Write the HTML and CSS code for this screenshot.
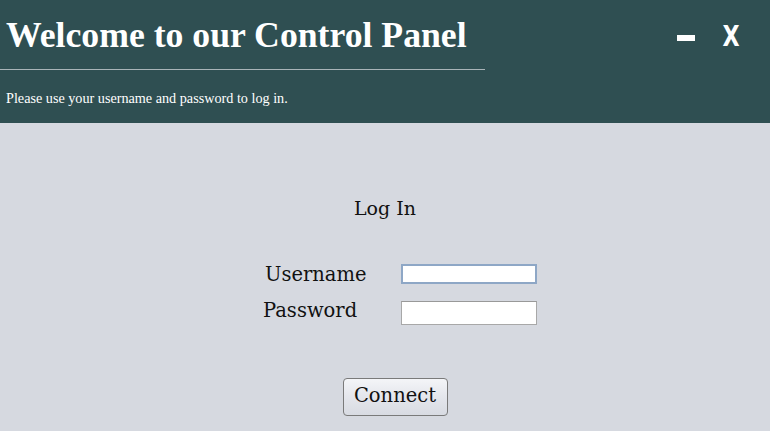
FILE: index.html
```html
<!DOCTYPE html>
<html>
<head>
<meta charset="utf-8">
<link rel="stylesheet" href="styles.css">
</head>
<body>
<header class="header">
  <div class="title-row">
    <h1 class="title">Welcome to our Control Panel</h1>
    <div class="controls">
      <span class="ctrl-min"></span>
      <span class="ctrl-close">X</span>
    </div>
  </div>
  <hr class="rule">
  <p class="subtitle">Please use your username and password to log in.</p>
</header>
<main class="main">
  <h2 class="login-title">Log In</h2>
  <form class="form">
    <div class="fields">
      <label class="label label-user">Username</label>
      <input class="input input-focus" type="text">
      <label class="label label-pass">Password</label>
      <input class="input input-pass" type="password">
    </div>
    <button class="btn" type="button">Connect</button>
  </form>
</main>
</body>
</html>
```
FILE: styles.css
```css
html, body { margin: 0; padding: 0; }
body {
  width: 770px;
  height: 431px;
  overflow: hidden;
  background: #d6d9e0;
  font-family: "DejaVu Serif", serif;
}
.header {
  background: #2f4f52;
  height: 123px;
  color: #fff;
}
.title-row {
  display: flex;
  align-items: flex-start;
  justify-content: space-between;
  height: 69px;
}
.title {
  margin: 0;
  padding: 17px 0 0 6px;
  font-family: "Liberation Serif", serif;
  font-weight: bold;
  font-size: 35.7px;
  line-height: 36px;
}
.controls {
  display: flex;
  align-items: center;
  gap: 26px;
  padding: 21px 29px 0 0;
}
.ctrl-min {
  display: block;
  width: 18px;
  height: 6px;
  background: #fff;
  margin-top: 3px;
}
.ctrl-close {
  font-family: "DejaVu Sans Condensed", "DejaVu Sans", sans-serif;
  font-weight: bold;
  font-size: 29px;
  line-height: 30px;
  transform: scaleX(0.85);
  color: #fff;
}
.rule {
  margin: 0;
  width: 485px;
  border: 0;
  height: 1px;
  background: #a9b4b8;
}
.subtitle {
  margin: 0;
  padding: 20px 0 0 6px;
  font-family: "Liberation Serif", serif;
  font-size: 14.2px;
  line-height: 16px;
}
.main {
  display: flex;
  flex-direction: column;
  align-items: center;
  padding-top: 73px;
}
.login-title {
  margin: 0;
  font-weight: normal;
  font-size: 19px;
  line-height: 24px;
  color: #111;
}
.form {
  display: flex;
  flex-direction: column;
  align-items: center;
}
.fields {
  display: grid;
  grid-template-columns: 136px 136px;
  row-gap: 15px;
  margin: 42px 0 0 32px;
  align-items: center;
}
.label {
  font-size: 19.5px;
  line-height: 22px;
  color: #111;
}
.label-user { padding-left: 0; margin-top: 2px; }
.label-pass { margin-top: -4px; margin-left: -2px; }
.input {
  width: 136px;
  height: 20px;
  box-sizing: border-box;
  border: 1px solid #a8a8a8;
  border-top-color: #999;
  background: #fff;
  margin: 0;
  padding: 0;
}
.input-focus {
  border: 2px solid #8ea7c6;
  outline: none;
}
.input-pass { height: 24px; }
.btn {
  margin: 53px 0 0 20px;
  width: 105px;
  height: 38px;
  padding: 0 0 3px;
  font-family: "DejaVu Serif", serif;
  font-size: 19.5px;
  color: #111;
  border: 1px solid #7a7a7a;
  border-radius: 4px;
  background: linear-gradient(#f4f5f8, #e4e6ec 50%, #d8dbe2);
}
```
